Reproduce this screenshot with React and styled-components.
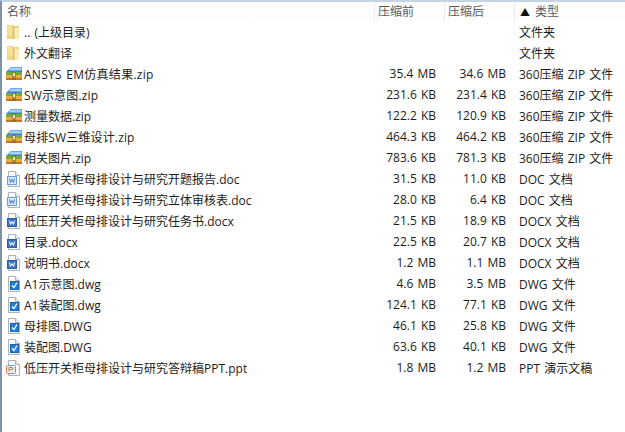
import React from "react";
import styled, { createGlobalStyle } from "styled-components";

const Global = createGlobalStyle`
  html, body { margin: 0; padding: 0; background: #fff; }
  body { font-family: "Open Sans", "Noto Sans CJK SC", sans-serif; font-size: 12px; color: #1c1c1c; word-spacing: 1px; }
`;
const Win = styled.div`
  width: 625px; height: 432px; box-sizing: border-box; overflow: hidden;
  background: #fff; border-left: 2px solid #7f93a6; border-top: 2px solid #c3d4e4;
`;
const Cols = "373px 70px 70px 1fr";
const Head = styled.div`
  display: grid; grid-template-columns: ${Cols}; height: 19px;
  background: linear-gradient(#fff, #fdfdfe); color: #5a5a5a;
`;
const HeadCell = styled.div`
  display: flex; align-items: center; box-sizing: border-box; padding-bottom: 1px;
  padding-left: ${p => p.$pad}px; border-right: ${p => (p.$last ? "none" : "1px solid #e8edf2")};
`;
const Arrow = styled.span`font-size: 10px; color: #111; margin-right: 5px;`;
const List = styled.div`display: flex; flex-direction: column;`;
const Row = styled.div`
  display: grid; grid-template-columns: ${Cols}; height: 21px; align-items: center; white-space: nowrap;
`;
const NameCell = styled.div`display: flex; align-items: center; gap: 2px; padding-left: 4px;`;
const Name = styled.span`letter-spacing: ${p => p.$track || 0}px;`;
const Size = styled.div`text-align: right; padding-right: 9px;`;
const Type = styled.div`padding-left: 4px;`;
const Ic = styled.svg`width: 16px; height: 16px; flex: none; display: block;`;

const Folder = () => (
  <Ic viewBox="0 0 16 16">
    <path d="M1 1h6l1 1h5v13H1z" fill="#efd27a" />
    <path d="M1.500 1.500h5v13h-5z" fill="#f5e09a" />
    <path d="M7 2l1.500 2v11H7z" fill="#dcbb62" />
    <path d="M8.500 4H13v11H8.500z" fill="#f9ecb6" />
    <path d="M1 11h6v4H1z" fill="#ecd07a" opacity=".6" />
  </Ic>
);
const Zip = () => (
  <Ic viewBox="0 0 16 16">
    <path d="M0 6l5-5h11v5z" fill="#3f82ca" />
    <path d="M5 1.500h10.500v3H2.500z" fill="#a3d2f5" />
    <rect x="0" y="6" width="16" height="3" fill="#79a83c" />
    <rect x="0" y="9" width="16" height="3" fill="#e8ae36" />
    <rect x="0" y="12" width="16" height="2" fill="#bd762e" />
    <rect x="6" y="6" width="4" height="8" fill="#6e5230" opacity=".4" />
    <rect x="7" y="7" width="2" height="3" fill="#f4e6b6" />
  </Ic>
);
const Page = ({ children }) => (
  <Ic viewBox="0 0 16 16">
    <path d="M2.500 .5h7l4 4v11h-11z" fill="#fbfbfb" stroke="#aab3bc" />
    <path d="M9.500 .5v4h4" fill="#e8edf1" stroke="#aab3bc" />
    {children}
  </Ic>
);
const Doc = ({ solid }) => (
  <Page>
    <rect x="1.500" y="5.500" width="9" height="8" fill={solid ? "#3f74c0" : "#dbe7f6"} stroke={solid ? "#2f5ea8" : "#6f9bd6"} />
    <path d="M3.500 7.500l1 4 1.500-3 1.500 3 1-4" fill="none" stroke={solid ? "#fff" : "#4a7cc4"} strokeWidth="1" />
  </Page>
);
const Dwg = () => (
  <Page>
    <rect x="4.500" y="5.500" width="8" height="8" fill="#1f7fdc" stroke="#1a62ae" />
    <path d="M6 9.500l2 2 3-5" fill="none" stroke="#fff" strokeWidth="1.200" />
  </Page>
);
const Ppt = () => (
  <Page>
    <rect x=".5" y="5.500" width="9" height="8" rx="1" fill="#fdf1ea" stroke="#d9783f" />
    <path d="M3 11.500v-4h3.500v2.200H3" fill="none" stroke="#d9783f" />
  </Page>
);

const zip = "360压缩 ZIP 文件";
const rows = [
  [<Folder />, ".. (上级目录)", "", "", "文件夹"],
  [<Folder />, "外文翻译", "", "", "文件夹"],
  [<Zip />, "ANSYS EM仿真结果.zip", "35.4 MB", "34.6 MB", zip, 0.28],
  [<Zip />, "SW示意图.zip", "231.6 KB", "231.4 KB", zip, 0.15],
  [<Zip />, "测量数据.zip", "122.2 KB", "120.9 KB", zip],
  [<Zip />, "母排SW三维设计.zip", "464.3 KB", "464.2 KB", zip, 0.15],
  [<Zip />, "相关图片.zip", "783.6 KB", "781.3 KB", zip],
  [<Doc />, "低压开关柜母排设计与研究开题报告.doc", "31.5 KB", "11.0 KB", "DOC 文档"],
  [<Doc />, "低压开关柜母排设计与研究立体审核表.doc", "28.0 KB", "6.4 KB", "DOC 文档"],
  [<Doc solid />, "低压开关柜母排设计与研究任务书.docx", "21.5 KB", "18.9 KB", "DOCX 文档"],
  [<Doc solid />, "目录.docx", "22.5 KB", "20.7 KB", "DOCX 文档"],
  [<Doc solid />, "说明书.docx", "1.2 MB", "1.1 MB", "DOCX 文档"],
  [<Dwg />, "A1示意图.dwg", "4.6 MB", "3.5 MB", "DWG 文件"],
  [<Dwg />, "A1装配图.dwg", "124.1 KB", "77.1 KB", "DWG 文件"],
  [<Dwg />, "母排图.DWG", "46.1 KB", "25.8 KB", "DWG 文件"],
  [<Dwg />, "装配图.DWG", "63.6 KB", "40.1 KB", "DWG 文件"],
  [<Ppt />, "低压开关柜母排设计与研究答辩稿PPT.ppt", "1.8 MB", "1.2 MB", "PPT 演示文稿"],
];

export default function App() {
  return (
    <Win>
      <Global />
      <Head>
        <HeadCell $pad={5}>名称</HeadCell>
        <HeadCell $pad={3}>压缩前</HeadCell>
        <HeadCell $pad={3}>压缩后</HeadCell>
        <HeadCell $pad={5} $last><Arrow>▲</Arrow>类型</HeadCell>
      </Head>
      <List>
        {rows.map(([icon, name, a, b, t, track], i) => (
          <Row key={i}>
            <NameCell>{icon}<Name $track={track}>{name}</Name></NameCell>
            <Size>{a}</Size>
            <Size>{b}</Size>
            <Type>{t}</Type>
          </Row>
        ))}
      </List>
    </Win>
  );
}
